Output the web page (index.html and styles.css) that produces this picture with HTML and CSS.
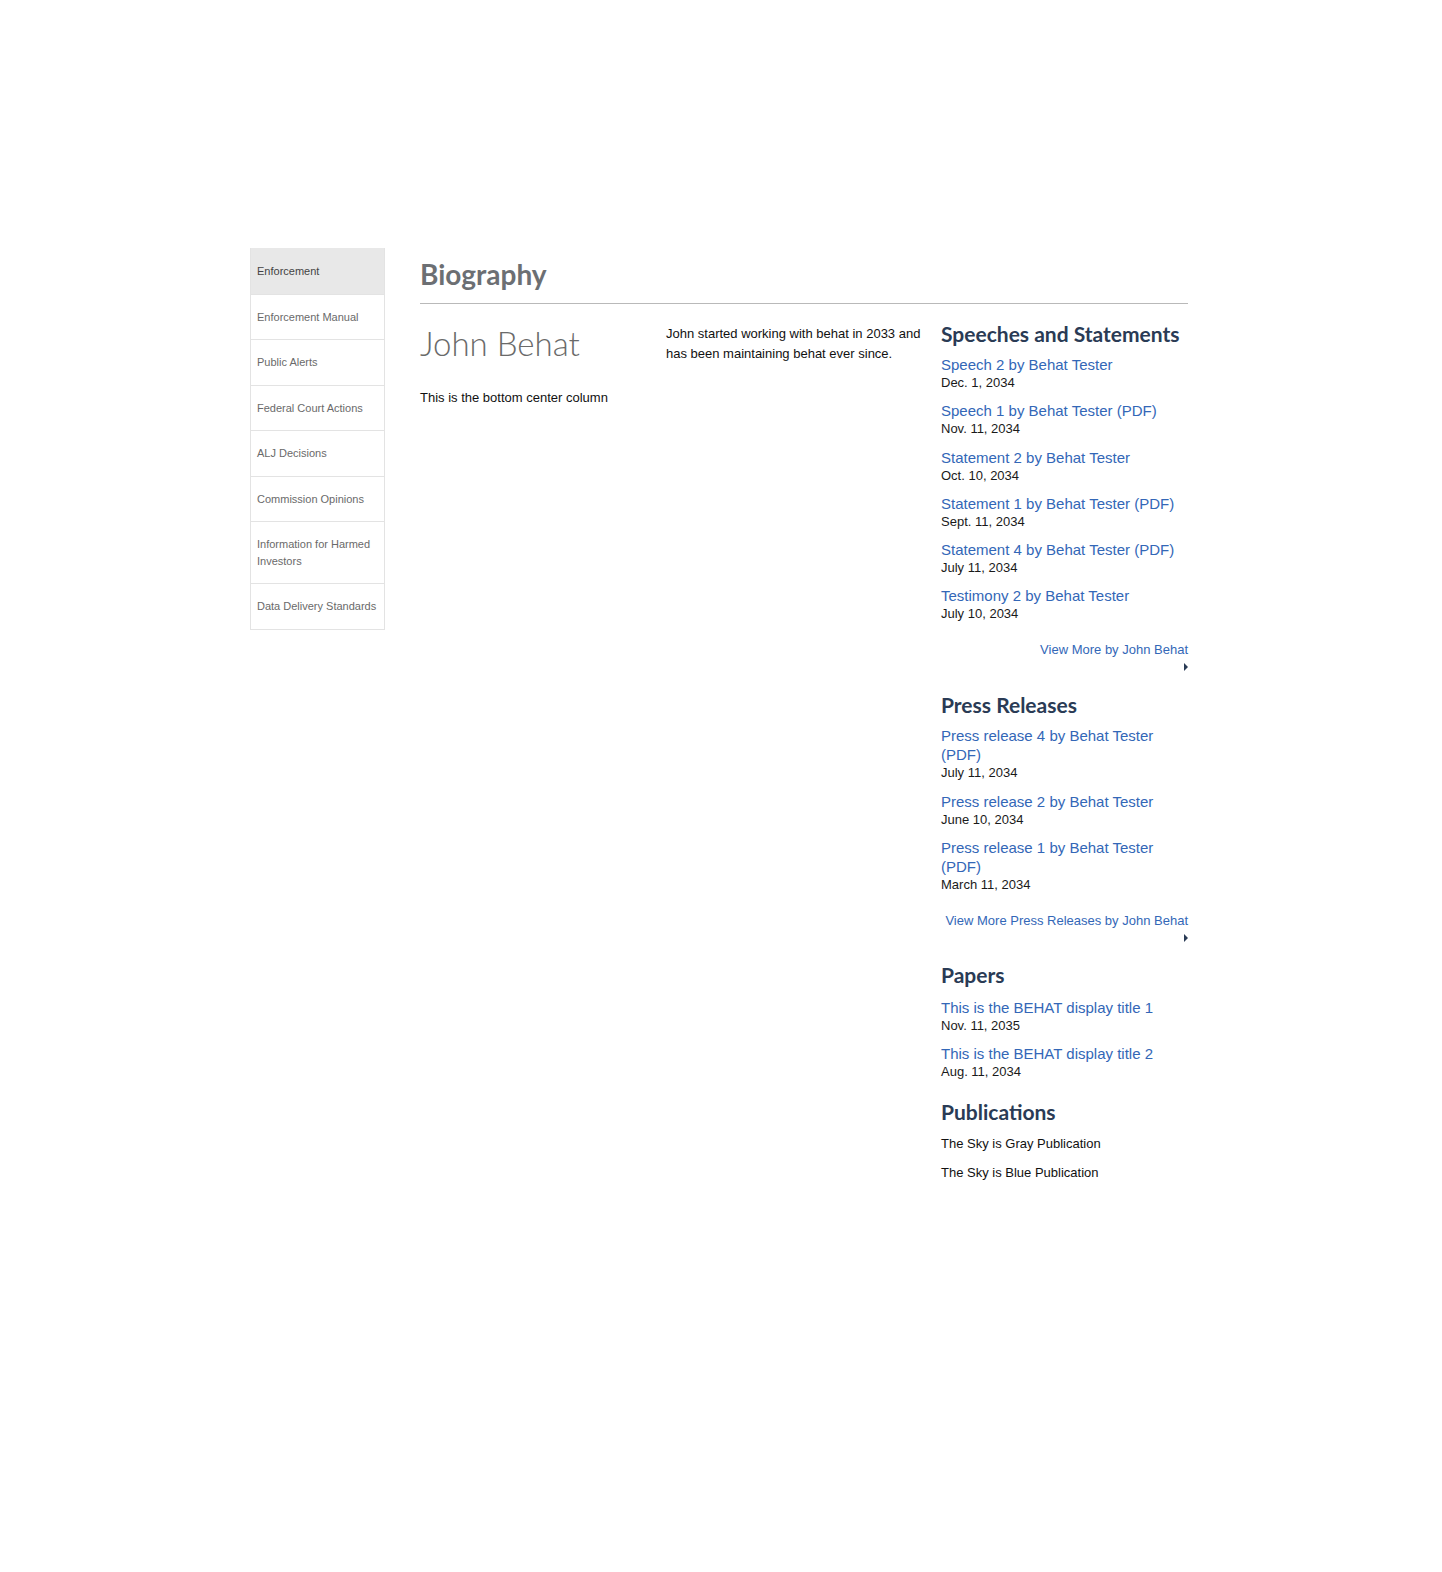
FILE: index.html
```html
<!DOCTYPE html>
<html lang="en">
<head>
<meta charset="utf-8">
<title>John Behat</title>
<link rel="stylesheet" href="styles.css">
</head>
<body>
<div class="page">
  <nav class="sidenav">
    <a class="nav-item active" href="#">Enforcement</a>
    <a class="nav-item" href="#">Enforcement Manual</a>
    <a class="nav-item" href="#">Public Alerts</a>
    <a class="nav-item" href="#">Federal Court Actions</a>
    <a class="nav-item" href="#">ALJ Decisions</a>
    <a class="nav-item" href="#">Commission Opinions</a>
    <a class="nav-item" href="#">Information for Harmed Investors</a>
    <a class="nav-item" href="#">Data Delivery Standards</a>
  </nav>
  <main class="main">
    <h1 class="page-title">Biography</h1>
    <div class="columns">
      <div class="col-left">
        <h2 class="person-name">John Behat</h2>
        <p class="plain">This is the bottom center column</p>
      </div>
      <div class="col-mid">
        <p class="bio">John started working with behat in 2033 and has been maintaining behat ever since.</p>
      </div>
      <div class="col-right">
        <section class="block">
          <h3 class="block-title">Speeches and Statements</h3>
          <ul class="items">
            <li><a href="#">Speech 2 by Behat Tester</a><span class="date">Dec. 1, 2034</span></li>
            <li><a href="#">Speech 1 by Behat Tester (PDF)</a><span class="date">Nov. 11, 2034</span></li>
            <li><a href="#">Statement 2 by Behat Tester</a><span class="date">Oct. 10, 2034</span></li>
            <li><a href="#">Statement 1 by Behat Tester (PDF)</a><span class="date">Sept. 11, 2034</span></li>
            <li><a href="#">Statement 4 by Behat Tester (PDF)</a><span class="date">July 11, 2034</span></li>
            <li><a href="#">Testimony 2 by Behat Tester</a><span class="date">July 10, 2034</span></li>
          </ul>
          <a class="more" href="#">View More by John Behat<span class="arrow"></span></a>
        </section>
        <section class="block block-press">
          <h3 class="block-title">Press Releases</h3>
          <ul class="items">
            <li><a href="#">Press release 4 by Behat Tester (PDF)</a><span class="date">July 11, 2034</span></li>
            <li><a href="#">Press release 2 by Behat Tester</a><span class="date">June 10, 2034</span></li>
            <li><a href="#">Press release 1 by Behat Tester (PDF)</a><span class="date">March 11, 2034</span></li>
          </ul>
          <a class="more" href="#">View More Press Releases by John Behat<span class="arrow"></span></a>
        </section>
        <section class="block block-papers">
          <h3 class="block-title">Papers</h3>
          <ul class="items">
            <li><a href="#">This is the BEHAT display title 1</a><span class="date">Nov. 11, 2035</span></li>
            <li><a href="#">This is the BEHAT display title 2</a><span class="date">Aug. 11, 2034</span></li>
          </ul>
        </section>
        <section class="block block-pubs">
          <h3 class="block-title">Publications</h3>
          <ul class="pubs">
            <li>The Sky is Gray Publication</li>
            <li>The Sky is Blue Publication</li>
          </ul>
        </section>
      </div>
    </div>
  </main>
</div>
</body>
</html>
```

FILE: styles.css
```css
* { box-sizing: border-box; }
html, body { margin: 0; padding: 0; background: #fff; }
body {
  font-family: "Liberation Sans", Arial, sans-serif;
  font-size: 13px;
  color: #111;
}
a { text-decoration: none; }

.page {
  display: flex;
  align-items: flex-start;
  gap: 35px;
  padding: 248px 0 0 250px;
  width: 938px;
  box-sizing: content-box;
}

.sidenav {
  flex: 0 0 135px;
  display: flex;
  flex-direction: column;
  border: 1px solid #e3e3e3;
  border-top: none;
}
.nav-item {
  display: block;
  padding: 14px 6px;
  font-size: 11px;
  line-height: 16.5px;
  color: #6a6a6a;
  border-top: 1px solid #e3e3e3;
}
.nav-item.active {
  background: #e8e8e8;
  color: #444;
  border-top-color: #e8e8e8;
}

.main { flex: 1 1 auto; min-width: 0; }

.page-title {
  margin: 0;
  font-family: "Lato", "Open Sans", sans-serif;
  font-weight: 700;
  font-size: 28px;
  line-height: 36px;
  padding-top: 8px;
  color: #6c6f73;
  padding-bottom: 11px;
  border-bottom: 1px solid #b9b9b9;
}

.columns {
  display: grid;
  grid-template-columns: 226px 255px 247px;
  column-gap: 20px;
  padding-top: 20px;
}

.person-name {
  margin: -3px 0 0;
  font-family: "Lato", "Open Sans", sans-serif;
  font-weight: 300;
  font-size: 33px;
  line-height: 44px;
  color: #6a6a6a;
}
.plain {
  margin: 24px 0 0;
  line-height: 18px;
}

.bio {
  margin: 0;
  line-height: 20px;
}

.col-right { margin-top: -2px; }

.block-title {
  margin: 0 0 9px;
  font-family: "Lato", "Open Sans", sans-serif;
  font-weight: 700;
  font-size: 21px;
  line-height: 24px;
  color: #2a3b55;
}
.block-press .block-title { margin-top: 22px; }
.block-papers .block-title { margin-top: 21px; margin-bottom: 11px; }
.block-pubs .block-title { margin-top: 20px; }

.items { list-style: none; margin: 0; padding: 0; }
.items li { margin-bottom: 10.3px; }
.items li a {
  display: block;
  font-size: 15px;
  line-height: 19px;
  color: #3367b7;
}
.date {
  display: block;
  font-size: 13px;
  line-height: 17px;
  color: #1a1a1a;
}

.more {
  display: block;
  margin-top: 19px;
  text-align: right;
  font-size: 13px;
  line-height: 18px;
  color: #3367b7;
}
.arrow {
  display: block;
  margin-left: auto;
  margin-top: 4px;
  margin-bottom: 5px;
  width: 0;
  height: 0;
  border-top: 4px solid transparent;
  border-bottom: 4px solid transparent;
  border-left: 4px solid #2a3b55;
}

.pubs { list-style: none; margin: 0; padding: 0; }
.pubs li {
  line-height: 17px;
  margin-top: 12px;
  color: #111;
}
.pubs li:first-child { margin-top: 11px; }
```
